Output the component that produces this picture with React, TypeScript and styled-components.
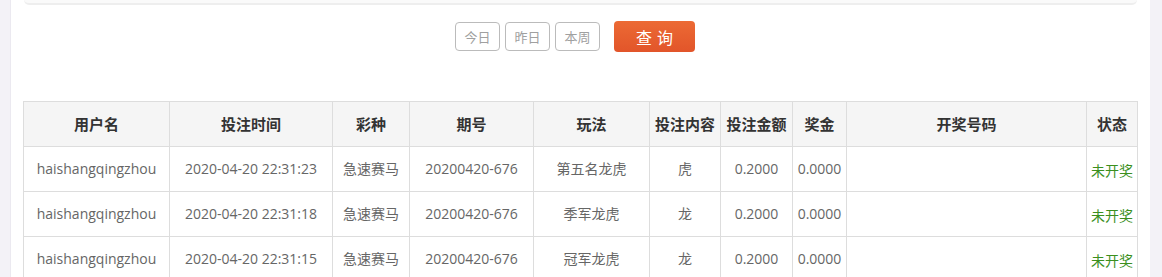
import React from "react";
import styled, { createGlobalStyle } from "styled-components";

const GlobalStyle = createGlobalStyle`
  html, body { margin: 0; padding: 0; background: #f3f2f7; }
  body { font-family: "Open Sans", "Noto Sans CJK SC", sans-serif; }
`;

const Page = styled.div`
  display: flex;
  height: 277px;
  overflow: hidden;
  background: #f3f2f7;
`;

const Panel = styled.div`
  margin-left: 10px;
  width: 1140px;
  background: #fff;
  border-left: 1px solid #ebe9f0;
  box-sizing: border-box;
  padding: 0 13px 0 12px;
`;

const TopBox = styled.div`
  height: 5px;
  margin: 0 0 0 1px;
  border-radius: 0 0 8px 8px;
  background: #fafafa;
  border-bottom: 2px solid #eeeeee;
  box-sizing: border-box;
`;

const Toolbar = styled.div`
  display: flex;
  align-items: center;
  justify-content: center;
  height: 31px;
  margin-top: 16px;
  padding-right: 10px;
`;

const QuickButton = styled.button`
  width: 45px;
  height: 29px;
  margin-right: 5px;
  padding: 0;
  border: 1px solid #bbbbbb;
  border-radius: 4px;
  background: #fff;
  color: #a0a0a0;
  font-family: "Noto Sans CJK SC", sans-serif;
  font-size: 13px;
`;

const SearchButton = styled.button`
  width: 81px;
  height: 31px;
  margin-left: 9px;
  padding: 0;
  border: none;
  border-radius: 4px;
  background: linear-gradient(#ec6a34, #e2552a);
  color: #fff;
  font-family: "Noto Sans CJK SC", sans-serif;
  font-size: 16px;
  letter-spacing: 5px;
  text-indent: 5px;
`;

const Table = styled.table`
  margin-top: 49px;
  width: 1114px;
  border-collapse: collapse;
  table-layout: fixed;
  font-size: 14px;
  color: #666;
`;

const Row = styled.tr`
  height: 45px;
`;

const Th = styled.th`
  border: 1px solid #dddddd;
  background: #f5f5f5;
  color: #333;
  font-family: "Noto Sans CJK SC", sans-serif;
  font-weight: bold;
  font-size: 15px;
  line-height: 20px;
  text-align: center;
  padding: 0;
  white-space: nowrap;
`;

const Td = styled.td<{ $status?: boolean }>`
  border: 1px solid #dddddd;
  text-align: center;
  line-height: 20px;
  padding: ${(p) => (p.$status ? "3px 0 0" : "0")};
  white-space: nowrap;
  color: ${(p) => (p.$status ? "#3b8f1d" : "#666")};
`;

const cols = [146, 163, 77, 124, 116, 71, 72, 54, 240, 51];
const headers = ["用户名", "投注时间", "彩种", "期号", "玩法", "投注内容", "投注金额", "奖金", "开奖号码", "状态"];

const rows = [
  ["haishangqingzhou", "2020-04-20 22:31:23", "急速赛马", "20200420-676", "第五名龙虎", "虎", "0.2000", "0.0000", "", "未开奖"],
  ["haishangqingzhou", "2020-04-20 22:31:18", "急速赛马", "20200420-676", "季军龙虎", "龙", "0.2000", "0.0000", "", "未开奖"],
  ["haishangqingzhou", "2020-04-20 22:31:15", "急速赛马", "20200420-676", "冠军龙虎", "龙", "0.2000", "0.0000", "", "未开奖"],
];

export default function App() {
  return (
    <>
      <GlobalStyle />
      <Page>
        <Panel>
          <TopBox />
          <Toolbar>
            <QuickButton>今日</QuickButton>
            <QuickButton>昨日</QuickButton>
            <QuickButton>本周</QuickButton>
            <SearchButton>查询</SearchButton>
          </Toolbar>
          <Table>
            <colgroup>
              {cols.map((w, i) => (
                <col key={i} style={{ width: w }} />
              ))}
            </colgroup>
            <thead>
              <Row>
                {headers.map((h) => (
                  <Th key={h}>{h}</Th>
                ))}
              </Row>
            </thead>
            <tbody>
              {rows.map((r, i) => (
                <Row key={i}>
                  {r.map((c, j) => (
                    <Td key={j} $status={j === 9}>{c}</Td>
                  ))}
                </Row>
              ))}
            </tbody>
          </Table>
        </Panel>
      </Page>
    </>
  );
}
